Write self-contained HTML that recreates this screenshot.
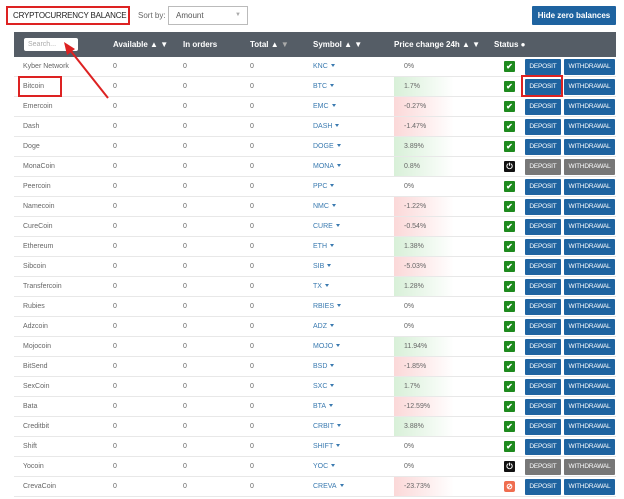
<!DOCTYPE html><html><head><meta charset="utf-8"><style>
*{margin:0;padding:0;box-sizing:border-box}
body{width:624px;height:499px;overflow:hidden;background:#fff;font-family:"Liberation Sans",sans-serif;position:relative;color:#555}
.abs{position:absolute}
.hdr{left:14px;top:32px;width:602px;height:25px;background:#555d66;color:#fff;font-size:8px;font-weight:bold}
.hdr span{position:absolute;top:8px;white-space:nowrap}
.row{position:absolute;left:14px;width:602px;height:20px;border-bottom:1px solid #e8e8e8;font-size:7px;color:#666}
.row span{position:absolute;top:6px;white-space:nowrap;line-height:8px}
.n{left:9px}.a{left:99px}.o{left:169px}.t{left:236px}.s{left:299px;color:#3a7ab0}
.s::after{content:"";display:inline-block;margin-left:3px;vertical-align:1px;border-left:2.5px solid transparent;border-right:2.5px solid transparent;border-top:3px solid #3a7ab0}
.p{left:390px}
.bar{position:absolute;left:380px;top:0;width:60px;height:19px}
.g{background:linear-gradient(90deg,#d8f0d8,#fff)}.r{background:linear-gradient(90deg,#fbd8d8,#fff)}
.st{position:absolute;left:490px;top:4px;width:11px;height:11px;background:#1e8a1e;border-radius:1px;color:#fff;font-size:8px;line-height:11px;text-align:center;font-weight:bold}
.st.k{background:#111}.st.e{background:#ef6d4f;border-radius:2px}
.d,.w{position:absolute;top:2px;height:16px;background:#1e63a0;color:#fff;font-size:6.5px;line-height:16px;text-align:center;border-radius:1px;letter-spacing:-0.2px;white-space:nowrap}
.d{left:511px;width:36px}.w{left:550px;width:51px}
.gr .d,.gr .w{background:#777}
</style></head><body>
<div class="abs" style="left:6px;top:6px;width:124px;height:19px;border:2px solid #d22;font-size:8px;color:#222;line-height:15px;padding-left:5px;white-space:nowrap;letter-spacing:-0.2px">CRYPTOCURRENCY BALANCE</div>
<div class="abs" style="left:138px;top:11px;font-size:8px;color:#666">Sort by:</div>
<div class="abs" style="left:168px;top:6px;width:80px;height:19px;border:1px solid #bbb;font-size:8px;color:#555;line-height:17px;padding-left:7px">Amount<span style="position:absolute;left:66px;color:#aaa;font-size:6px">▼</span></div>
<div class="abs" style="left:532px;top:6px;width:84px;height:19px;background:#1e63a0;color:#fff;font-size:8px;font-weight:bold;line-height:19px;text-align:center;border-radius:1px">Hide zero balances</div>
<div class="abs hdr">
<div style="position:absolute;left:10px;top:6px;width:54px;height:13px;background:#fff;border-radius:2px;color:#aaa;font-weight:normal;font-size:7px;line-height:13px;padding-left:4px">Search...</div>
<span style="left:99px">Available ▲ ▼</span><span style="left:169px">In orders</span><span style="left:236px">Total ▲ <span style="position:static;color:#aaa">▼</span></span><span style="left:299px">Symbol ▲ ▼</span><span style="left:380px">Price change 24h ▲ ▼</span><span style="left:480px">Status ●</span></div>

<div class="row" style="top:57px"><span class="n">Kyber Network</span><span class="a">0</span><span class="o">0</span><span class="t">0</span><span class="s">KNC</span><span class="p">0%</span><div class="st">✔</div><div class="d">DEPOSIT</div><div class="w">WITHDRAWAL</div></div>
<div class="row" style="top:77px"><span class="n">Bitcoin</span><span class="a">0</span><span class="o">0</span><span class="t">0</span><span class="s">BTC</span><div class="bar g"></div><span class="p">1.7%</span><div class="st">✔</div><div class="d">DEPOSIT</div><div class="w">WITHDRAWAL</div></div>
<div class="row" style="top:97px"><span class="n">Emercoin</span><span class="a">0</span><span class="o">0</span><span class="t">0</span><span class="s">EMC</span><div class="bar r"></div><span class="p">-0.27%</span><div class="st">✔</div><div class="d">DEPOSIT</div><div class="w">WITHDRAWAL</div></div>
<div class="row" style="top:117px"><span class="n">Dash</span><span class="a">0</span><span class="o">0</span><span class="t">0</span><span class="s">DASH</span><div class="bar r"></div><span class="p">-1.47%</span><div class="st">✔</div><div class="d">DEPOSIT</div><div class="w">WITHDRAWAL</div></div>
<div class="row" style="top:137px"><span class="n">Doge</span><span class="a">0</span><span class="o">0</span><span class="t">0</span><span class="s">DOGE</span><div class="bar g"></div><span class="p">3.89%</span><div class="st">✔</div><div class="d">DEPOSIT</div><div class="w">WITHDRAWAL</div></div>
<div class="row gr" style="top:157px"><span class="n">MonaCoin</span><span class="a">0</span><span class="o">0</span><span class="t">0</span><span class="s">MONA</span><div class="bar g"></div><span class="p">0.8%</span><div class="st k">⏻</div><div class="d">DEPOSIT</div><div class="w">WITHDRAWAL</div></div>
<div class="row" style="top:177px"><span class="n">Peercoin</span><span class="a">0</span><span class="o">0</span><span class="t">0</span><span class="s">PPC</span><span class="p">0%</span><div class="st">✔</div><div class="d">DEPOSIT</div><div class="w">WITHDRAWAL</div></div>
<div class="row" style="top:197px"><span class="n">Namecoin</span><span class="a">0</span><span class="o">0</span><span class="t">0</span><span class="s">NMC</span><div class="bar r"></div><span class="p">-1.22%</span><div class="st">✔</div><div class="d">DEPOSIT</div><div class="w">WITHDRAWAL</div></div>
<div class="row" style="top:217px"><span class="n">CureCoin</span><span class="a">0</span><span class="o">0</span><span class="t">0</span><span class="s">CURE</span><div class="bar r"></div><span class="p">-0.54%</span><div class="st">✔</div><div class="d">DEPOSIT</div><div class="w">WITHDRAWAL</div></div>
<div class="row" style="top:237px"><span class="n">Ethereum</span><span class="a">0</span><span class="o">0</span><span class="t">0</span><span class="s">ETH</span><div class="bar g"></div><span class="p">1.38%</span><div class="st">✔</div><div class="d">DEPOSIT</div><div class="w">WITHDRAWAL</div></div>
<div class="row" style="top:257px"><span class="n">Sibcoin</span><span class="a">0</span><span class="o">0</span><span class="t">0</span><span class="s">SIB</span><div class="bar r"></div><span class="p">-5.03%</span><div class="st">✔</div><div class="d">DEPOSIT</div><div class="w">WITHDRAWAL</div></div>
<div class="row" style="top:277px"><span class="n">Transfercoin</span><span class="a">0</span><span class="o">0</span><span class="t">0</span><span class="s">TX</span><div class="bar g"></div><span class="p">1.28%</span><div class="st">✔</div><div class="d">DEPOSIT</div><div class="w">WITHDRAWAL</div></div>
<div class="row" style="top:297px"><span class="n">Rubies</span><span class="a">0</span><span class="o">0</span><span class="t">0</span><span class="s">RBIES</span><span class="p">0%</span><div class="st">✔</div><div class="d">DEPOSIT</div><div class="w">WITHDRAWAL</div></div>
<div class="row" style="top:317px"><span class="n">Adzcoin</span><span class="a">0</span><span class="o">0</span><span class="t">0</span><span class="s">ADZ</span><span class="p">0%</span><div class="st">✔</div><div class="d">DEPOSIT</div><div class="w">WITHDRAWAL</div></div>
<div class="row" style="top:337px"><span class="n">Mojocoin</span><span class="a">0</span><span class="o">0</span><span class="t">0</span><span class="s">MOJO</span><div class="bar g"></div><span class="p">11.94%</span><div class="st">✔</div><div class="d">DEPOSIT</div><div class="w">WITHDRAWAL</div></div>
<div class="row" style="top:357px"><span class="n">BitSend</span><span class="a">0</span><span class="o">0</span><span class="t">0</span><span class="s">BSD</span><div class="bar r"></div><span class="p">-1.85%</span><div class="st">✔</div><div class="d">DEPOSIT</div><div class="w">WITHDRAWAL</div></div>
<div class="row" style="top:377px"><span class="n">SexCoin</span><span class="a">0</span><span class="o">0</span><span class="t">0</span><span class="s">SXC</span><div class="bar g"></div><span class="p">1.7%</span><div class="st">✔</div><div class="d">DEPOSIT</div><div class="w">WITHDRAWAL</div></div>
<div class="row" style="top:397px"><span class="n">Bata</span><span class="a">0</span><span class="o">0</span><span class="t">0</span><span class="s">BTA</span><div class="bar r"></div><span class="p">-12.59%</span><div class="st">✔</div><div class="d">DEPOSIT</div><div class="w">WITHDRAWAL</div></div>
<div class="row" style="top:417px"><span class="n">Creditbit</span><span class="a">0</span><span class="o">0</span><span class="t">0</span><span class="s">CRBIT</span><div class="bar g"></div><span class="p">3.88%</span><div class="st">✔</div><div class="d">DEPOSIT</div><div class="w">WITHDRAWAL</div></div>
<div class="row" style="top:437px"><span class="n">Shift</span><span class="a">0</span><span class="o">0</span><span class="t">0</span><span class="s">SHIFT</span><span class="p">0%</span><div class="st">✔</div><div class="d">DEPOSIT</div><div class="w">WITHDRAWAL</div></div>
<div class="row gr" style="top:457px"><span class="n">Yocoin</span><span class="a">0</span><span class="o">0</span><span class="t">0</span><span class="s">YOC</span><span class="p">0%</span><div class="st k">⏻</div><div class="d">DEPOSIT</div><div class="w">WITHDRAWAL</div></div>
<div class="row" style="top:477px"><span class="n">CrevaCoin</span><span class="a">0</span><span class="o">0</span><span class="t">0</span><span class="s">CREVA</span><div class="bar r"></div><span class="p">-23.73%</span><div class="st e">⊘</div><div class="d">DEPOSIT</div><div class="w">WITHDRAWAL</div></div>

<div class="abs" style="left:18px;top:76px;width:44px;height:21px;border:2px solid #d22"></div>
<div class="abs" style="left:521px;top:75px;width:42px;height:22px;border:2px solid #d22"></div>
<svg class="abs" style="left:0;top:0" width="624" height="499"><line x1="108" y1="98" x2="70" y2="50" stroke="#d22" stroke-width="2"/><polygon points="64,42 75,49 67,55" fill="#d22"/></svg>
</body></html>
